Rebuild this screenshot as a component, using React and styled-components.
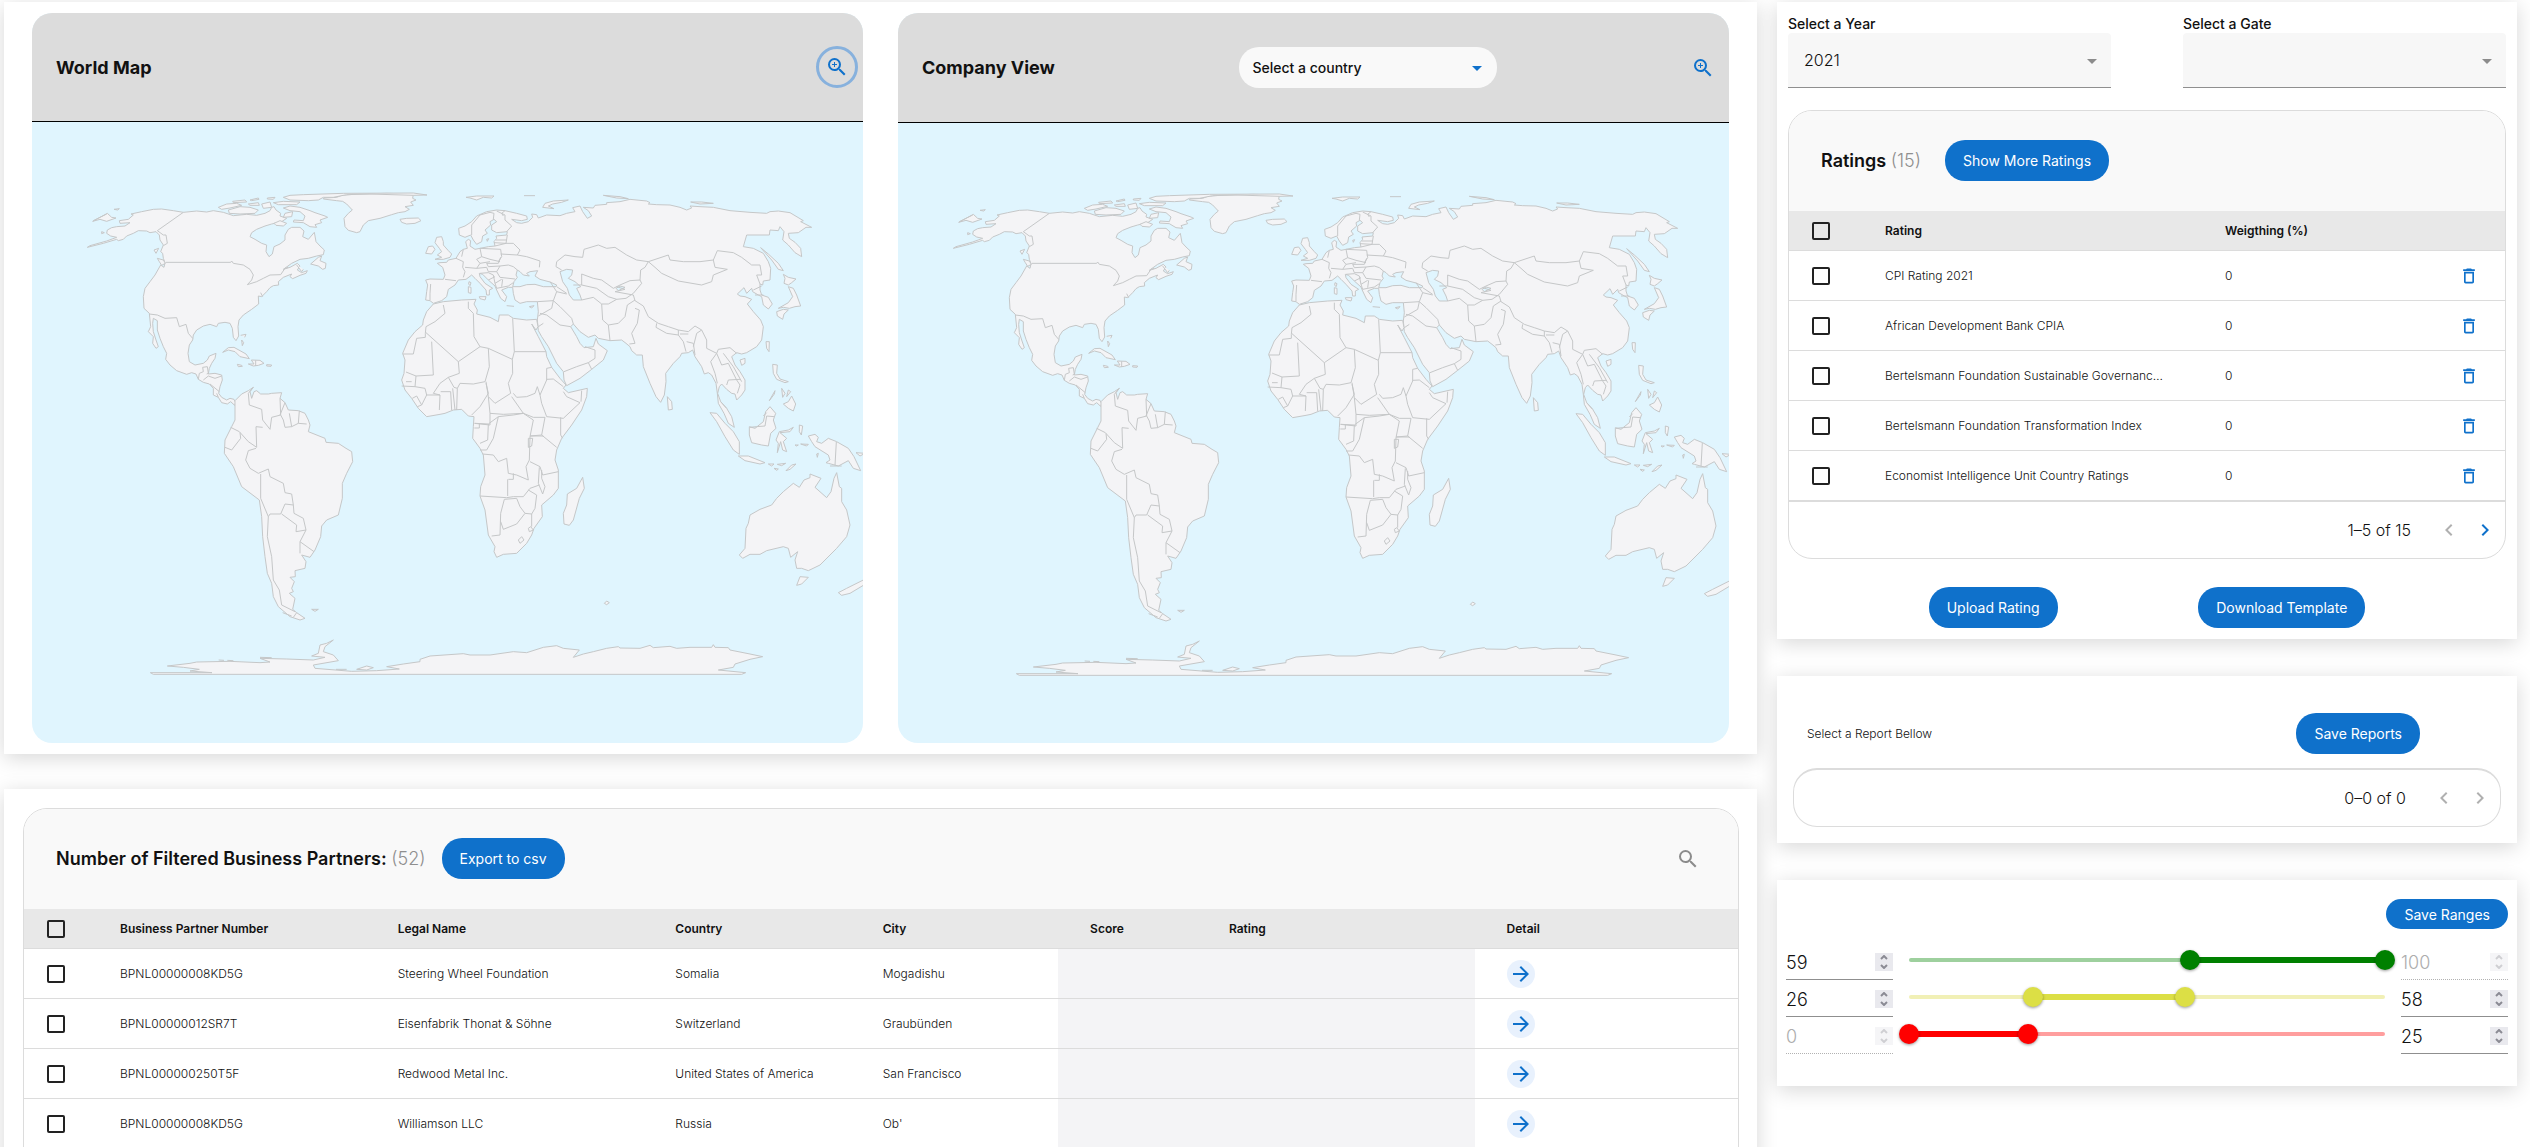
import React, { useState } from "react";
import styled, { createGlobalStyle } from "styled-components";
import {
  MdArrowDropDown,
  MdArrowForward,
  MdChevronLeft,
  MdChevronRight,
  MdDeleteOutline,
  MdSearch,
  MdZoomIn,
} from "react-icons/md";

const blue = "#0f71cb";
const ink = "#111111";
const line = "#dcdcdc";
const muted = "#999999";

const GlobalStyle = createGlobalStyle`
  * { box-sizing: border-box; }
  body { margin: 0; background: #ffffff; }
  body, button, input, select {
    font-family: Inter, "Liberation Sans", sans-serif;
    color: ${ink};
  }
  h2, p { margin: 0; }
`;

const Page = styled.main`
  display: grid;
  grid-template-columns: minmax(0, 1753fr) minmax(0, 740fr);
  gap: 20px;
  height: 100vh;
  padding: 2px 13px 0 4px;
  overflow: hidden;
`;

const Column = styled.div`
  display: flex;
  flex-direction: column;
  gap: ${(p) => p.$gap}px;
`;

const Panel = styled.section`
  background: #ffffff;
  padding: ${(p) => p.$pad};
  box-shadow: 0 4px 20px rgba(0, 0, 0, 0.16);
`;

/* Maps */

const MapsPanel = styled(Panel)`
  display: grid;
  grid-template-columns: 1fr 1fr;
  gap: 35px;
`;

const MapCard = styled.article`
  display: flex;
  flex-direction: column;
  border-radius: 20px;
  overflow: hidden;
  background: #e0f5fe;
`;

const MapHeader = styled.header`
  display: flex;
  align-items: center;
  justify-content: space-between;
  height: ${(p) => (p.$tall ? 110 : 109)}px;
  padding: 0 5px 0 24px;
  background: #dcdcdc;
  border-bottom: 1px solid #000000;
`;

const MapTitle = styled.h2`
  font-size: 18px;
  font-weight: 700;
`;

const RoundButton = styled.button`
  display: flex;
  align-items: center;
  justify-content: center;
  width: 42px;
  height: 42px;
  padding: 0;
  border: 3px solid ${(p) => (p.$ring ? "#87b1dd" : "transparent")};
  border-radius: 50%;
  background: none;
  color: ${blue};
  font-size: 24px;
`;

const MapDrawing = styled.svg`
  display: block;
  width: 100%;
  height: auto;
  fill: #f4f4f6;
  stroke: #c5c7c8;
  stroke-width: 3;
  stroke-linejoin: round;
`;

const SelectWrap = styled.span`
  display: grid;
  align-items: center;
  & > * { grid-area: 1 / 1; }
  & > svg {
    justify-self: end;
    margin-right: ${(p) => (p.$pill ? 8 : 7)}px;
    font-size: 24px;
    color: ${(p) => (p.$pill ? blue : "#8c8c8c")};
    pointer-events: none;
  }
`;

const CountrySelect = styled.select`
  appearance: none;
  width: 258px;
  height: 41px;
  padding: 0 36px 0 13px;
  border: 0;
  border-radius: 20px;
  background: #f9f9f9;
  font-size: 14px;
  font-weight: 500;
`;

/* Shared controls */

const PillButton = styled.button`
  height: ${(p) => (p.$small ? 30 : 41)}px;
  padding: 0 18px;
  border: 0;
  border-radius: 20px;
  background: ${blue};
  color: #ffffff;
  font-size: 14px;
  font-weight: 400;
  white-space: nowrap;
`;

const IconButton = styled.button`
  display: inline-flex;
  align-items: center;
  justify-content: center;
  width: 28px;
  height: 28px;
  padding: 0;
  border: 0;
  border-radius: 50%;
  background: ${(p) => (p.$filled ? "#e8f1fd" : "none")};
  color: ${(p) => (p.$muted ? "#8c8c8c" : blue)};
  font-size: ${(p) => p.$size || 20}px;
  vertical-align: middle;
  &:disabled { color: #b0b0b0; }
`;

const Check = styled.input`
  appearance: none;
  display: block;
  width: 18px;
  height: 18px;
  margin: 0;
  border: 2px solid #222222;
  border-radius: 2px;
  &:checked { background: ${blue}; border-color: ${blue}; }
`;

/* Data grids */

const Grid = styled.div`
  border: 1px solid ${line};
  border-top-width: ${(p) => (p.$bare ? 2 : 1)}px;
  border-radius: 24px;
  overflow: hidden;
  background: #ffffff;
`;

const GridHeader = styled.header`
  display: flex;
  align-items: center;
  height: 100px;
  padding: 0 36px 1px 32px;
  background: #f9f9f9;
  & > button:last-child:not(:nth-child(2)) { margin-left: auto; }
`;

const GridTitle = styled.h2`
  margin-right: ${(p) => (p.$tight ? 16 : 24)}px;
  font-size: 18px;
  font-weight: 600;
`;

const Count = styled.span`
  color: #8f8f8f;
  font-weight: 300;
`;

const Table = styled.table`
  width: 100%;
  table-layout: fixed;
  border-collapse: separate;
  border-spacing: 0;
  font-size: 12px;
`;

const Th = styled.th`
  width: ${(p) => p.$w || "auto"};
  height: 40px;
  padding: 0 32px;
  border-bottom: 1px solid ${line};
  background: #e8e8e8;
  font-weight: 600;
  text-align: left;
`;

const Td = styled.td`
  height: 50px;
  padding: ${(p) => (p.$action ? "0" : "0 24px 0 32px")};
  border-bottom: 1px solid ${line};
  background: ${(p) => (p.$shade ? "#f4f4f6" : "#ffffff")};
  font-weight: 300;
  text-align: ${(p) => (p.$action ? "center" : "left")};
  white-space: nowrap;
  overflow: hidden;
  text-overflow: ellipsis;
`;

const CheckTh = styled(Th)`
  width: 64px;
  padding: 0 23px;
`;

const CheckTd = styled(Td)`
  padding: 0 23px;
`;

const GridFooter = styled.footer`
  display: flex;
  align-items: center;
  justify-content: flex-end;
  gap: 8px;
  box-sizing: content-box;
  height: 56px;
  padding-right: 6px;
  border-top: ${(p) => (p.$line ? `1px solid ${line}` : "0")};
  font-size: 16px;
  font-weight: 300;
`;

const PageCount = styled.span`
  margin-right: 16px;
`;

const GridTail = styled.div`
  height: 56px;
`;

/* Right column */

const FilterRow = styled.div`
  display: grid;
  grid-template-columns: 1fr 1fr;
  gap: 72px;
  margin-bottom: 22px;
`;

const Field = styled.label`
  display: flex;
  flex-direction: column;
  font-size: 14px;
  line-height: 18px;
  font-weight: 500;
`;

const FilledSelect = styled.select`
  appearance: none;
  width: 100%;
  height: 55px;
  padding: 0 32px 0 16px;
  border: 0;
  border-bottom: 1px solid #8f8f8f;
  border-radius: 4px 4px 0 0;
  background: #f7f7f7;
  font-size: 16px;
  font-weight: 300;
`;

const ButtonRow = styled.div`
  display: flex;
  justify-content: space-evenly;
  margin-top: 28px;
`;

const ReportHead = styled.div`
  display: flex;
  align-items: center;
  justify-content: space-between;
  padding: 0 81px 0 14px;
  margin-bottom: 14px;
  font-size: 12px;
  font-weight: 300;
`;

const RangeHead = styled.div`
  display: flex;
  justify-content: flex-end;
  margin-bottom: 14px;
`;

const RangeRow = styled.div`
  display: grid;
  grid-template-columns: 107px 1fr 107px;
  gap: 16px;
  height: 37px;
`;

const NumberBox = styled.div`
  display: flex;
  align-items: center;
  padding-top: 2px;
  border-bottom: 1px ${(p) => (p.$off ? "dotted #a0a0a0" : "solid #8f8f8f")};
  opacity: ${(p) => (p.$off ? 0.8 : 1)};
`;

const NumberInput = styled.input`
  appearance: textfield;
  flex: 1;
  min-width: 0;
  padding: 0;
  border: 0;
  background: none;
  font-size: 18px;
  font-weight: 300;
  &::-webkit-inner-spin-button { appearance: none; }
  &:disabled { color: ${muted}; }
`;

const Steps = styled.span`
  display: flex;
  flex-direction: column;
  width: 18px;
  background: #e9e9ee;
  opacity: ${(p) => (p.$off ? 0.5 : 1)};
`;

const Step = styled.button`
  display: flex;
  align-items: center;
  justify-content: center;
  height: 9px;
  padding: 0;
  border: 0;
  background: none;
  & svg { width: 8px; height: 5px; fill: none; stroke: #8b8b94; stroke-width: 2; }
`;

const Slider = styled.div`
  position: relative;
  height: 20px;
  margin-top: 7px;
`;

const Rail = styled.div`
  position: absolute;
  top: 8px;
  left: 0;
  right: 0;
  height: 4px;
  border-radius: 2px;
  background: ${(p) => p.$color};
`;

const Span = styled.div`
  position: absolute;
  top: 7px;
  height: 6px;
  background: ${(p) => p.$color};
`;

const Thumb = styled.input`
  appearance: none;
  position: absolute;
  top: 0;
  left: -10px;
  width: calc(100% + 20px);
  height: 20px;
  margin: 0;
  background: none;
  pointer-events: none;
  &::-webkit-slider-thumb {
    appearance: none;
    width: 20px;
    height: 20px;
    border: 0;
    border-radius: 50%;
    background: ${(p) => p.$color};
    box-shadow: 0 1px 3px rgba(0, 0, 0, 0.4);
    pointer-events: auto;
  }
`;

const partners = [
  ["BPNL00000008KD5G", "Steering Wheel Foundation", "Somalia", "Mogadishu"],
  ["BPNL00000012SR7T", "Eisenfabrik Thonat & Söhne", "Switzerland", "Graubünden"],
  ["BPNL000000250T5F", "Redwood Metal Inc.", "United States of America", "San Francisco"],
  ["BPNL00000008KD5G", "Williamson LLC", "Russia", "Ob'"],
];

const ratings = [
  "CPI Rating 2021",
  "African Development Bank CPIA",
  "Bertelsmann Foundation Sustainable Governance Index",
  "Bertelsmann Foundation Transformation Index",
  "Economist Intelligence Unit Country Ratings",
];

const startRanges = [
  { name: "Low risk", from: 59, to: 100, color: "#008000", rail: "#9ed09e", lockTo: true },
  { name: "Medium risk", from: 26, to: 58, color: "#dcdf45", rail: "#f1f0b6" },
  { name: "High risk", from: 0, to: 25, color: "#ff0000", rail: "#ff9e9e", lockFrom: true },
];

function WorldMap({ label }) {
  return (
    <MapDrawing viewBox="0 0 2493 1860" role="img" aria-label={label}>
      {/* North America, Greenland, Iceland */}
      <g transform="translate(114 174)">
        <path d="M110,160 L112,150 125,143 140,140 165,138 180,128 150,130 148,122 175,118 190,105 183,102 215,95 250,88 275,87 310,92 340,97 380,93 410,96 430,92 460,97 490,107 530,103 560,106 585,100 600,92 605,82 612,80 618,90 632,100 630,108 650,115 635,125 605,132 585,138 560,148 545,158 540,170 555,178 575,190 590,195 588,215 597,230 607,222 612,200 630,192 645,180 645,165 655,148 665,142 690,142 702,153 698,170 715,178 733,157 738,185 750,198 763,210 760,224 740,228 715,235 690,238 665,250 640,268 660,262 682,250 690,258 682,270 695,278 712,272 708,280 690,286 668,296 660,290 665,282 640,292 625,305 626,315 610,317 600,323 590,335 575,350 565,348 566,372 545,388 520,405 507,420 504,440 506,468 498,482 490,472 487,445 480,430 465,427 445,430 440,440 420,433 400,438 380,450 370,465 368,480 358,495 354,520 358,545 375,555 400,550 412,540 418,528 438,520 435,535 425,550 418,565 415,582 435,580 455,585 457,600 450,620 446,640 455,652 470,660 480,655 492,658 497,668 494,676 482,665 472,672 455,668 445,652 430,645 430,625 418,612 400,607 385,598 378,582 365,578 350,583 320,572 300,555 287,538 290,520 280,500 270,475 262,450 262,422 250,415 248,430 250,455 258,480 265,500 258,505 248,490 250,470 235,455 242,440 238,400 222,385 220,350 225,325 240,305 255,285 272,255 282,262 285,248 280,235 278,220 272,215 280,195 270,180 268,165 258,155 240,158 230,153 205,152 190,160 170,168 160,178 145,182 140,178 100,190 52,202 60,197 110,183 140,172 122,168Z" />
        <path d="M760,57 L762,54 800,52 815,46 850,43 950,40 1030,42 1028,55 1038,60 1022,66 1030,76 1005,80 1018,88 1005,95 985,98 965,104 930,115 895,122 880,135 870,155 860,158 835,151 825,140 822,115 835,100 847,90 830,72 818,64 800,62Z" />
        <path d="M640,52 L660,46 700,44 820,40 1030,39 1071,45 1030,46 900,42 830,44 790,52 760,52 745,60 715,62 660,60Z" />
        <path d="M990,118 L1010,115 1045,114 1053,122 1035,130 1010,132 995,127Z M445,82 L470,72 500,70 515,76 480,84 455,88Z M475,90 L510,80 540,82 565,90 555,100 510,102 478,100Z M488,64 L525,60 530,66 490,68Z M540,60 L565,54 567,58 545,62Z M535,72 L565,68 568,76 540,76Z M575,72 L600,66 605,82 580,85Z M592,54 L615,52 610,58 592,57Z M610,68 L640,64 690,66 680,74 625,74Z M640,84 L660,78 690,82 720,92 735,98 765,108 773,112 750,120 755,128 735,134 740,142 720,140 700,128 670,126 672,120 700,122 705,108 690,95 660,92Z M645,100 L668,95 665,110 640,112Z M612,130 L630,122 650,130 640,138 618,136Z M722,252 L745,232 755,228 750,242 768,250 766,265 758,268 745,258Z M252,210 L266,205 258,220Z M262,235 L280,240 286,250 275,256 268,245Z M458,517 L475,503 492,502 510,512 528,522 538,536 510,530 495,515 475,510Z M535,552 L552,552 544,540 570,541 582,550 565,556 550,558Z M502,553 L515,556 517,559 505,560Z M590,554 L605,555 603,559 590,558Z M512,466 L528,463 524,472 M515,480 L521,488 517,497Z M68,124 L112,100 125,112 138,114 110,124 90,118Z M132,88 L148,86 143,90Z M95,155 L103,158 95,161Z M680,255 L695,275 700,268" />
        <g fill="none">
          <path d="M288,247 L482,247 485,243 490,250 520,255 540,268 550,285 545,300 532,314 560,305 580,295 600,285 632,284 645,265 M340,97 L262,152 280,165 288,165 292,190 280,197 M238,402 L262,405 285,415 320,413 328,440 348,433 355,460 368,475 M385,598 L388,580 400,575 398,562 412,560 415,580 410,582 M400,600 L415,588 435,595 455,588 M420,612 L448,635 M440,640 L445,652 M70,122 L110,102 M557,541 L557,558 M645,265 L655,262 M572,338 L578,350" />
        </g>
      </g>

      {/* Europe, Asia, Africa */}
      <g transform="translate(1044 174)">
        <path d="M137,300 L150,297 190,298 195,285 188,262 172,250 180,248 200,247 205,240 228,235 240,215 250,208 262,205 257,185 265,178 272,182 270,198 285,208 300,205 325,200 345,198 342,185 350,175 348,168 380,165 382,155 350,158 335,150 335,135 350,125 342,118 330,125 332,135 315,150 322,160 308,168 305,185 290,193 280,180 272,165 255,172 238,165 236,145 255,138 275,125 290,108 320,95 350,90 375,92 410,100 440,108 442,118 425,122 395,118 410,128 425,130 445,125 458,112 455,102 470,104 475,114 500,105 540,107 560,100 585,95 578,83 600,78 608,95 622,115 635,108 625,92 610,82 640,84 645,76 680,73 680,68 720,65 750,58 800,63 810,68 805,72 830,74 870,75 900,82 920,90 935,84 930,78 960,80 1000,82 1050,92 1110,97 1160,100 1170,95 1195,93 1230,98 1270,122 1262,125 1295,142 1278,142 1255,158 1225,160 1228,175 1245,187 1262,205 1265,230 1245,218 1225,195 1208,180 1212,155 1200,140 1195,152 1170,150 1168,165 1100,165 1090,200 1120,205 1150,220 1165,245 1172,265 1170,300 1150,303 1148,315 1140,312 1140,330 1145,345 1165,352 1177,372 1165,387 1150,375 1145,350 1135,345 1118,335 1115,325 1100,340 1092,323 1072,342 1080,348 1095,350 1115,358 1102,372 1120,395 1142,420 1150,440 1145,480 1130,500 1100,518 1085,522 1070,518 1055,530 1065,555 1080,575 1095,600 1095,630 1085,645 1070,660 1065,642 1055,640 1040,628 1025,612 1018,620 1013,640 1022,665 1040,685 1055,710 1063,742 1045,730 1032,700 1015,670 1012,640 1008,610 995,585 985,578 973,582 965,560 945,530 938,510 925,518 905,520 900,530 880,550 857,580 858,605 853,645 842,667 828,650 810,610 790,560 787,525 770,525 755,512 750,500 738,490 725,480 690,482 655,475 645,465 625,472 600,455 580,432 572,440 590,470 600,490 612,503 640,500 648,475 655,492 682,512 670,540 635,568 600,595 560,617 552,600 550,575 530,550 505,500 485,470 475,452 472,420 475,395 472,365 440,365 420,370 405,360 400,340 398,322 385,322 365,330 380,350 375,365 362,355 350,330 345,318 325,300 308,283 298,280 300,290 315,310 338,325 328,330 328,345 320,345 318,330 300,310 285,295 275,285 258,298 235,300 225,315 205,328 200,350 185,362 160,370 150,362 137,360 140,335 143,315Z" />
        <path d="M160,372 L190,365 245,360 288,358 282,372 292,390 290,402 330,412 355,425 358,405 385,405 400,415 440,420 470,418 474,440 468,450 455,432 475,470 498,515 500,530 515,562 540,595 558,615 550,625 565,638 622,625 620,650 605,690 575,735 545,775 530,810 525,840 535,870 535,925 520,945 485,975 487,1010 462,1045 455,1065 440,1090 410,1120 370,1123 350,1132 342,1115 345,1100 325,1065 315,990 300,948 302,920 315,885 310,825 300,805 278,775 280,740 282,710 265,708 245,688 220,690 195,700 180,703 140,710 115,685 95,655 75,630 65,600 72,580 75,540 68,520 85,480 105,455 128,435 130,420 140,395Z" />
        <path d="M165,238 L185,232 172,225 185,215 178,205 165,188 170,172 185,170 190,185 190,195 205,212 215,222 210,232 190,238Z M137,220 L145,200 158,198 165,208 155,222Z M265,320 L273,322 273,340 265,338Z M267,305 L273,308 270,317 266,312Z M298,350 L318,350 315,360 300,356Z M380,377 L402,379 M448,380 L462,377 455,384Z M488,82 L495,70 520,63 565,60 545,67 518,72 505,78 522,86Z M258,52 L290,48 342,48 335,54 310,52 290,60 270,54Z M432,47 L465,47 M670,46 L720,50 745,56 710,54Z M932,66 L965,66 1000,70 960,72Z M1142,203 L1165,222 1195,250 1210,272 1195,268 1175,240Z M1210,283 L1225,292 1248,297 1235,308 1225,315 1212,310 1215,295Z M1225,320 L1240,325 1250,345 1262,378 1245,380 1228,385 1210,382 1195,385 1225,368 1238,350Z M1190,395 L1210,388 1225,390 1212,402 1208,418 1192,408Z M1158,485 L1168,485 1167,515 1160,505Z M1080,540 L1095,535 1095,550 1085,556Z M862,650 L875,665 877,688 865,690Z M1178,553 L1192,555 1190,580 1200,597 1225,605 1215,608 1190,598 1180,580Z M1168,662 L1185,632 1183,642Z M1205,625 L1215,640 1208,652Z M1225,630 L1232,635 1220,650Z M1210,672 L1225,665 1235,648 1247,672 1240,693 1225,685Z M320,178 L326,176 322,184Z" />
        <g fill="#e0f5fe">
          <path d="M412,270 L408,285 412,292 402,305 398,320 420,320 440,314 465,313 490,320 528,320 530,315 510,306 480,298 465,288 473,272 450,275 440,280 448,288 430,285 420,275Z M540,275 L560,268 578,270 575,285 565,295 585,305 602,320 590,325 600,345 605,360 580,360 568,345 562,325 548,305Z" />
          <path d="M708,325 L720,318 735,322 715,332Z" />
        </g>
        <g fill="none">
          <path d="M190,375 L195,400 165,425 138,440 136,460 M68,522 L100,522 110,475 136,472 136,460 M138,458 L235,545 300,500 282,470 280,400 265,385 265,365 M155,485 L160,585 108,588 78,576 M300,500 L325,505 397,538 403,515 398,415 M403,515 L498,515 M235,545 L238,580 205,592 M325,505 L328,560 315,605 280,612 240,610 232,625 M397,538 L398,580 385,610 392,640 345,670 325,650 318,605 M400,640 L410,652 440,650 465,640 472,620 480,645 500,600 M500,565 L515,562 M500,600 L500,565 M500,598 L520,597 550,620 M550,635 L560,650 600,668 550,715 500,710 485,670 480,645 M605,632 L603,665 M542,712 L542,765 548,775 M232,625 L230,690 M318,610 L325,640 300,680 275,705 M325,650 L330,700 370,703 430,700 395,650 M330,700 L330,735 283,730 M65,618 L105,620 135,625 140,645 180,645 178,690 M78,605 L95,605 M108,588 L105,620 M180,645 L160,640 180,610 205,592 222,622 232,625 M182,635 L212,635 215,690 M218,625 L225,690 M97,655 L110,648 125,675 112,680 M125,675 L140,645 M430,700 L460,712 495,712 485,765 450,768 M485,765 L530,802" />
          <path d="M152,312 L150,340 150,360 M228,235 L250,245 248,262 255,275 250,292 M195,298 L228,302 M250,208 L245,230 M300,205 L305,230 290,238 300,250 290,265 255,262 M305,230 L330,238 360,245 M300,205 L362,208 365,230 355,245 M300,250 L330,245 M290,265 L320,262 325,275 350,275 360,258 325,260 320,250 355,250 M360,258 L385,255 400,260 412,270 M350,275 L360,292 405,297 M300,280 L325,278 340,285 345,310 365,298 M325,300 L345,290 M345,310 L350,325 385,318 400,308 M365,320 L368,298 M345,198 L378,190 400,190 420,210 412,225 362,222 M412,225 L440,230 480,243 478,262 M362,232 L355,250 M342,188 L378,190 382,165 M348,180 L380,180 M275,165 L275,135 300,105 330,97 342,100 340,118 M350,93 L375,105 375,120 395,138 380,155 M375,92 L365,100 370,108" />
          <path d="M530,245 L555,225 585,230 608,232 612,208 655,195 680,205 705,202 740,225 770,240 805,245 795,262 782,270 780,300 750,302 720,315 700,325 665,300 640,295 605,282 605,315 580,315 M530,245 L528,260 545,270 M805,245 L865,225 870,240 910,245 960,245 1000,240 1005,262 1042,268 1000,285 995,305 965,315 895,303 845,280 825,262 805,245 M1000,240 L1012,212 1060,218 1085,232 1115,255 1140,255 1145,285 1130,285 1140,312 M605,315 L650,325 685,350 710,358 738,355 760,340 785,310 780,300 M605,360 L640,352 665,372 685,372 710,358 M665,372 L668,420 685,435 690,482 M685,435 L715,430 735,410 742,375 765,360 M760,345 L765,362 790,378 805,410 835,430 865,440 895,450 925,455 945,438 965,450 980,480 980,505 1010,520 1015,508 1050,503 1070,520 M765,385 L778,390 772,430 755,460 765,490 748,492 M830,430 L828,442 860,460 895,465 895,450 M895,465 L910,485 918,515 M920,485 L940,490 945,525 M900,462 L925,462 M940,500 L950,460 965,450 M1010,520 L992,545 1005,580 1012,610 M1010,520 L1025,555 1045,550 1070,600 1080,615 1072,640 M1030,520 L1060,560 1085,605 M1045,600 L1080,598 M1040,615 L1045,600 M472,365 L520,362 515,385 475,408 M520,362 L540,380 575,415 580,432 M480,400 L500,405 540,435 572,440 M490,430 L475,440 M552,575 L590,560 625,548 645,535 645,510 615,500 M625,548 L635,568 M510,305 L530,335 520,362 M530,320 L560,340 M530,335 L560,342 M1120,330 L1145,318 M1125,345 L1150,345 M710,320 L735,328 705,335 760,345 M1022,665 L1040,685" />
        </g>
      </g>

      {/* South America, southern Africa, Antarctica */}
      <g transform="translate(474 744)">
        <path d="M135,92 L155,72 175,62 190,52 180,65 185,85 192,65 200,62 212,72 235,72 245,70 275,68 270,85 285,98 295,120 325,122 345,130 355,150 360,165 355,185 375,193 405,205 408,217 445,220 468,235 485,245 488,275 470,310 457,340 457,385 445,435 410,450 395,468 392,500 375,540 360,562 335,555 348,575 345,595 315,602 316,620 300,622 313,635 305,655 310,665 298,670 315,685 308,718 320,728 345,745 330,750 300,740 265,710 250,680 245,640 232,610 225,560 218,500 215,440 208,390 155,350 130,290 103,250 105,210 125,170 135,150 135,105Z" />
        <path d="M-119,908 L66,908 0,903 28,898 -20,892 -68,888 0,880 20,876 120,874 210,878 240,876 210,865 290,867 370,870 405,862 365,858 385,850 390,825 410,820 430,810 405,830 400,845 430,855 445,872 370,885 375,895 485,904 560,902 628,897 590,890 640,882 690,875 690,868 720,858 820,851 840,855 900,855 970,845 1010,848 1060,832 1100,827 1120,835 1168,840 1150,862 1180,852 1210,845 1250,835 1285,830 1290,834 1350,835 1380,826 1390,833 1440,829 1460,835 1500,832 1565,832 1570,824 1575,832 1615,833 1620,840 1680,852 1718,860 1680,868 1635,882 1630,892 1585,900 1667,908 1655,913 -110,913Z" />
        <path d="M1178,322 L1183,355 1168,385 1150,450 1138,466 1122,462 1120,430 1130,405 1132,372 1160,355Z M365,718 L385,718 375,724Z M500,898 L530,888 550,893 530,900Z M210,862 L245,863 M86,870 L102,871 M112,871 L130,872 M438,898 L470,898" />
        <g fill="none">
          <path d="M190,52 L175,70 178,105 215,118 218,150 240,178 245,142 272,135 270,85 M270,135 L285,98 M272,135 L280,150 285,172 305,170 325,160 350,162 M305,170 L298,130 M325,160 L328,122 M218,172 L198,170 200,232 175,215 148,185 122,172 M150,188 L152,205 125,240 105,232 M198,235 L175,242 167,270 180,295 205,310 235,297 240,320 280,340 285,368 305,372 310,405 285,402 272,432 240,432 235,440 212,385 212,312 M310,405 L312,430 340,445 348,480 318,485 320,465 275,432 M348,480 L330,515 372,545 M330,515 L330,550 M235,440 L232,500 245,560 250,630 268,660 275,705 315,725 M320,728 L310,742 M278,728 L305,738" />
          <path d="M855,160 L895,162 925,140 970,135 1000,130 1030,150 1020,200 1018,270 1008,290 1015,330 980,315 955,310 950,265 925,275 910,255 878,252 M870,240 L890,240 910,205 925,140 M895,162 L893,210 870,220 M870,378 L950,383 970,380 1000,380 1020,355 1048,345 M955,328 L970,328 970,310 M953,328 L953,378 M1020,275 L1050,290 1058,315 1105,305 M1048,292 L1045,340 1058,372 1065,350 1055,325 1055,300 M943,388 L932,430 930,495 905,498 M943,388 L980,385 990,410 1005,430 980,462 940,478 932,455 M1015,360 L1040,375 1035,415 1025,432 1005,430 M1025,432 L1025,470 M1015,475 L1022,470 1030,480 1018,485Z M985,510 L995,500 1002,510 990,520Z M1020,198 L1060,198 M1015,205 L1028,205 1025,228 1015,232Z M853,174 L868,174 868,162" />
        </g>
      </g>

      {/* Oceania */}
      <g transform="translate(1404 834)">
        <path d="M718,465 L735,445 738,385 745,370 750,345 780,328 815,315 830,295 850,275 880,250 898,262 912,240 930,233 930,222 963,235 945,262 980,293 993,275 1002,235 1010,218 1018,260 1025,265 1025,305 1040,330 1050,375 1040,410 1010,445 960,495 925,512 905,505 890,505 885,480 893,455 872,472 865,445 850,440 800,452 780,463 750,463 728,475Z" />
        <path d="M900,530 L925,532 905,552 890,556Z M1015,578 L1040,565 1100,535 1100,550 1050,580 1025,586Z M630,38 L650,40 675,70 700,95 718,125 718,163 700,150 675,110 650,65Z M715,168 L745,168 795,188 780,192 735,182Z M748,80 L765,85 790,65 797,35 810,20 827,40 820,60 828,85 812,100 805,138 785,135 755,128 748,105Z M838,95 L865,90 880,82 870,95 840,98 860,115 850,125 860,155 848,150 842,125 832,158 835,130 828,120Z M898,75 L908,78 904,105 898,95Z M925,108 L945,103 955,112 950,125 965,130 985,115 1010,125 1045,145 1062,170 1082,212 1060,205 1045,182 1015,198 985,190 978,188 990,180 985,165 945,140 935,125Z M902,132 L925,133 920,138Z M885,135 L895,135 890,138Z M805,192 L822,192 815,198Z M832,193 L857,190 845,197Z M858,212 L875,195 888,192 870,208Z M822,205 L835,207 830,211Z M950,162 L955,160 952,172Z M1068,158 L1095,160 1080,168Z M313,610 L320,603 328,608 320,614Z M990,198 L1025,198" />
        <path fill="none" d="M1009,126 L1005,196 M750,82 L770,80 795,78 800,48 822,50 M790,48 L800,38" />
      </g>
    </MapDrawing>
  );
}

function Pager({ text, first, last, line: ruled }) {
  return (
    <GridFooter $line={ruled}>
      <PageCount>{text}</PageCount>
      <IconButton $size={24} disabled={first} aria-label="Previous page">
        <MdChevronLeft />
      </IconButton>
      <IconButton $size={24} disabled={last} aria-label="Next page">
        <MdChevronRight />
      </IconButton>
    </GridFooter>
  );
}

function NumberField({ label, value, off, onChange }) {
  return (
    <NumberBox $off={off}>
      <NumberInput
        type="number"
        aria-label={label}
        value={value}
        disabled={off}
        onChange={(e) => onChange(Number(e.target.value))}
      />
      <Steps $off={off}>
        <Step aria-label={`Increase ${label}`} disabled={off} onClick={() => onChange(value + 1)}>
          <svg viewBox="0 0 8 5"><path d="M1,4 L4,1 7,4" /></svg>
        </Step>
        <Step aria-label={`Decrease ${label}`} disabled={off} onClick={() => onChange(value - 1)}>
          <svg viewBox="0 0 8 5"><path d="M1,1 L4,4 7,1" /></svg>
        </Step>
      </Steps>
    </NumberBox>
  );
}

function RangeLine({ range, onChange }) {
  const { name, from, to, color, rail, lockFrom, lockTo } = range;
  return (
    <RangeRow>
      <NumberField label={`${name} from`} value={from} off={lockFrom} onChange={(v) => onChange({ from: v })} />
      <Slider>
        <Rail $color={rail} />
        <Span $color={color} style={{ left: `${from}%`, width: `${to - from}%` }} />
        <Thumb
          type="range"
          $color={color}
          aria-label={`${name} lower bound`}
          value={from}
          onChange={(e) => onChange({ from: Number(e.target.value) })}
        />
        <Thumb
          type="range"
          $color={color}
          aria-label={`${name} upper bound`}
          value={to}
          onChange={(e) => onChange({ to: Number(e.target.value) })}
        />
      </Slider>
      <NumberField label={`${name} to`} value={to} off={lockTo} onChange={(v) => onChange({ to: v })} />
    </RangeRow>
  );
}

export default function App() {
  const [ranges, setRanges] = useState(startRanges);
  const change = (index, patch) =>
    setRanges(ranges.map((r, i) => (i === index ? { ...r, ...patch } : r)));

  return (
    <>
      <GlobalStyle />
      <Page>
        <Column $gap={35}>
          <MapsPanel $pad="11px 28px">
            <MapCard>
              <MapHeader>
                <MapTitle>World Map</MapTitle>
                <RoundButton $ring aria-label="Enlarge world map"><MdZoomIn /></RoundButton>
              </MapHeader>
              <WorldMap label="World map" />
            </MapCard>
            <MapCard>
              <MapHeader $tall>
                <MapTitle>Company View</MapTitle>
                <SelectWrap $pill>
                  <CountrySelect aria-label="Country" defaultValue="">
                    <option value="">Select a country</option>
                  </CountrySelect>
                  <MdArrowDropDown />
                </SelectWrap>
                <RoundButton aria-label="Enlarge company view"><MdZoomIn /></RoundButton>
              </MapHeader>
              <WorldMap label="Company map" />
            </MapCard>
          </MapsPanel>

          <Panel $pad="19px 18px 19px 19px">
            <Grid>
              <GridHeader>
                <GridTitle $tight>
                  Number of Filtered Business Partners: <Count>(52)</Count>
                </GridTitle>
                <PillButton>Export to csv</PillButton>
                <IconButton $size={24} $muted aria-label="Search"><MdSearch /></IconButton>
              </GridHeader>
              <Table>
                <thead>
                  <tr>
                    <CheckTh><Check type="checkbox" aria-label="Select all partners" /></CheckTh>
                    <Th $w="16.2%">Business Partner Number</Th>
                    <Th $w="16.2%">Legal Name</Th>
                    <Th $w="12.1%">Country</Th>
                    <Th $w="12.1%">City</Th>
                    <Th $w="8.1%">Score</Th>
                    <Th $w="16.2%">Rating</Th>
                    <Th>Detail</Th>
                  </tr>
                </thead>
                <tbody>
                  {partners.map(([number, name, country, city]) => (
                    <tr key={name}>
                      <CheckTd><Check type="checkbox" aria-label={`Select ${name}`} /></CheckTd>
                      <Td>{number}</Td>
                      <Td>{name}</Td>
                      <Td>{country}</Td>
                      <Td>{city}</Td>
                      <Td $shade />
                      <Td $shade />
                      <Td>
                        <IconButton $filled $size={24} aria-label={`Open ${name}`}><MdArrowForward /></IconButton>
                      </Td>
                    </tr>
                  ))}
                </tbody>
              </Table>
              <GridTail />
            </Grid>
          </Panel>
        </Column>

        <Column $gap={37}>
          <Panel $pad="13px 11px 11px">
            <FilterRow>
              <Field>
                Select a Year
                <SelectWrap>
                  <FilledSelect defaultValue="2021"><option>2021</option></FilledSelect>
                  <MdArrowDropDown />
                </SelectWrap>
              </Field>
              <Field>
                Select a Gate
                <SelectWrap>
                  <FilledSelect defaultValue=""><option value="" aria-label="None" /></FilledSelect>
                  <MdArrowDropDown />
                </SelectWrap>
              </Field>
            </FilterRow>
            <Grid>
              <GridHeader>
                <GridTitle>Ratings <Count>(15)</Count></GridTitle>
                <PillButton>Show More Ratings</PillButton>
              </GridHeader>
              <Table>
                <thead>
                  <tr>
                    <CheckTh><Check type="checkbox" aria-label="Select all ratings" /></CheckTh>
                    <Th $w="47.5%">Rating</Th>
                    <Th>Weigthing (%)</Th>
                    <Th $w="72px" aria-label="Actions" />
                  </tr>
                </thead>
                <tbody>
                  {ratings.map((name) => (
                    <tr key={name}>
                      <CheckTd><Check type="checkbox" aria-label={`Select ${name}`} /></CheckTd>
                      <Td>{name}</Td>
                      <Td>0</Td>
                      <Td $action>
                        <IconButton aria-label={`Delete ${name}`}><MdDeleteOutline /></IconButton>
                      </Td>
                    </tr>
                  ))}
                </tbody>
              </Table>
              <Pager text="1–5 of 15" first line />
            </Grid>
            <ButtonRow>
              <PillButton>Upload Rating</PillButton>
              <PillButton>Download Template</PillButton>
            </ButtonRow>
          </Panel>

          <Panel $pad="37px 16px 16px">
            <ReportHead>
              <p>Select a Report Bellow</p>
              <PillButton>Save Reports</PillButton>
            </ReportHead>
            <Grid $bare>
              <Pager text="0–0 of 0" first last />
            </Grid>
          </Panel>

          <Panel $pad="19px 9px 32px">
            <RangeHead><PillButton $small>Save Ranges</PillButton></RangeHead>
            {ranges.map((range, index) => (
              <RangeLine key={range.name} range={range} onChange={(patch) => change(index, patch)} />
            ))}
          </Panel>
        </Column>
      </Page>
    </>
  );
}
